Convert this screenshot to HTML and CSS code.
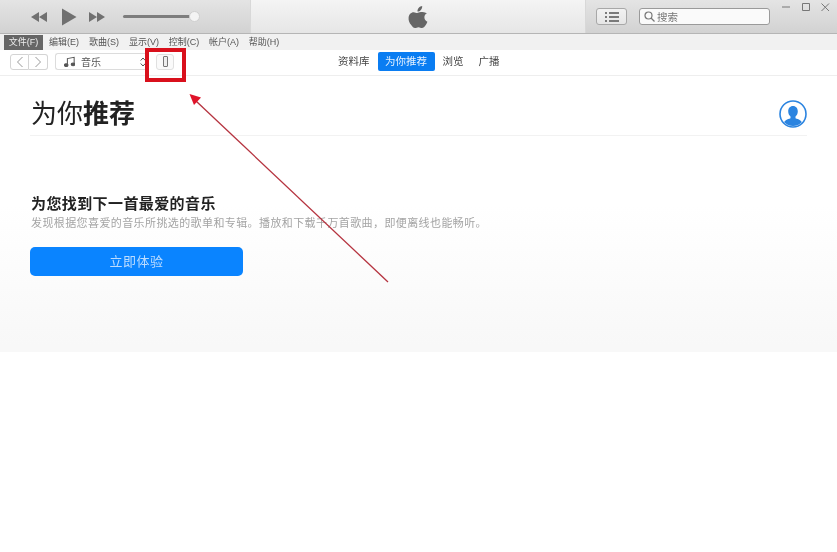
FILE: index.html
```html
<!DOCTYPE html>
<html lang="zh">
<head>
<meta charset="utf-8">
<title>iTunes</title>
<link rel="stylesheet" href="styles.css">
</head>
<body>
<div class="app">
  <header class="titlebar">
    <div class="player">
      <svg class="transport" width="82" height="22" viewBox="0 0 82 22">
        <path class="glyph" d="M16 6v10l-8-5zM24 6v10l-8-5z"/>
        <path class="glyph" d="M39 2.500v17l14.500-8.500z"/>
        <path class="glyph" d="M66 6v10l8-5zM74 6v10l8-5z"/>
      </svg>
      <div class="volume"><span class="knob"></span></div>
    </div>
    <div class="lcd">
      <svg class="apple" width="20" height="24" viewBox="0 0 20 24">
        <path d="M14.200 1c.1 1.700-.5 3-1.400 4-.9 1-2.100 1.700-3.300 1.600-.2-1.500.5-3 1.300-3.900.9-1 2.300-1.600 3.400-1.700zM18.900 8.300c-1.700 1-2.600 2.400-2.500 4.200.1 2 1.200 3.400 3 4.200-.5 1.400-1.100 2.700-2 3.900-1 1.300-2 2.400-3.400 2.400-1.400 0-1.900-.8-3.500-.8s-2.200.8-3.500.8c-1.500 0-2.600-1.300-3.600-2.700C1.200 17.900.3 15 .6 12.400c.3-2.800 2.300-5.200 5.100-5.200 1.400 0 2.700.9 3.500.9.800 0 2.200-1.100 3.900-1 1.500.1 4.300.4 5.800 1.200z"/>
      </svg>
    </div>
    <div class="tools">
      <button class="listbtn" type="button">
        <svg width="14" height="10" viewBox="0 0 14 10"><path d="M0 1h2M4 1h10M0 5h2M4 5h10M0 9h2M4 9h10"/></svg>
      </button>
      <div class="search">
        <svg width="11" height="11" viewBox="0 0 11 11"><circle cx="4.500" cy="4.500" r="3.500"/><path d="M7 7l3.500 3.500"/></svg>
        <span>搜索</span>
      </div>
      <div class="winctl">
        <svg width="56" height="12" viewBox="0 0 56 12">
          <path d="M1 5h8M21.500 1.500h7v7h-7zM40.500 1.500l7.500 7.500M48 1.500L40.500 9"/>
        </svg>
      </div>
    </div>
  </header>

  <nav class="menubar">
    <span class="menu active">文件(F)</span>
    <span class="menu">编辑(E)</span>
    <span class="menu">歌曲(S)</span>
    <span class="menu">显示(V)</span>
    <span class="menu">控制(C)</span>
    <span class="menu">帐户(A)</span>
    <span class="menu">帮助(H)</span>
  </nav>

  <div class="toolbar">
    <div class="navgroup">
      <button class="navbtn" type="button"><svg width="8" height="12" viewBox="0 0 8 12"><path d="M6.500 1L1.500 6l5 5"/></svg></button>
      <button class="navbtn" type="button"><svg width="8" height="12" viewBox="0 0 8 12"><path d="M1.500 1l5 5-5 5"/></svg></button>
    </div>
    <div class="source">
      <svg class="note" width="11" height="12" viewBox="0 0 13 13"><path d="M4 10V2.500l8-1.500v8"/><ellipse cx="2.600" cy="10.300" rx="2.100" ry="1.600"/><ellipse cx="10.600" cy="9.300" rx="2.100" ry="1.600"/></svg>
      <span class="source-name">音乐</span>
      <svg class="updown" width="6" height="10" viewBox="0 0 6 10"><path d="M.7 3.500L3 1l2.300 2.500M.7 6.500L3 9l2.300-2.500"/></svg>
    </div>
    <button class="device" type="button"><span class="phone"></span></button>
    <div class="tabs">
      <span class="tab">资料库</span>
      <span class="tab current">为你推荐</span>
      <span class="tab">浏览</span>
      <span class="tab">广播</span>
    </div>
  </div>

  <main class="content">
    <div class="heading">
      <h1 class="title">为你<b>推荐</b></h1>
      <svg class="avatar" width="28" height="28" viewBox="0 0 28 28">
        <defs><clipPath id="disc"><circle cx="14" cy="14" r="12"/></clipPath></defs>
        <circle class="ring" cx="14" cy="14" r="13"/>
        <g clip-path="url(#disc)">
          <path class="figure" d="M14 6c3 0 4.800 2.300 4.800 5.200 0 2.300-1 4.300-2.300 5.300v1.700c2.800 1 7 2 7 6.800v3H4.500v-3c0-4.800 4.200-5.800 7-6.800v-1.700c-1.300-1-2.300-3-2.300-5.300C9.200 8.300 11 6 14 6z"/>
        </g>
      </svg>
    </div>
    <section class="promo">
      <h2 class="promo-title">为您找到下一首最爱的音乐</h2>
      <p class="promo-text">发现根据您喜爱的音乐所挑选的歌单和专辑。播放和下载千万首歌曲，即便离线也能畅听。</p>
      <button class="cta" type="button">立即体验</button>
    </section>
  </main>

  <div class="blank"></div>

  <svg class="annotation" width="837" height="552" viewBox="0 0 837 552">
    <rect class="mark-box" x="147" y="50" width="37" height="30"/>
    <path class="mark-line" d="M388 282L196 101"/>
    <path class="mark-head" d="M189.500 94l11.500 3.500-7 7.500z"/>
  </svg>
</div>
</body>
</html>
```
FILE: styles.css
```css
* { box-sizing: border-box; }

html, body {
  margin: 0;
  height: 100%;
  background: #fff;
}

body {
  font-family: "Liberation Sans", "Noto Sans CJK SC", sans-serif;
  color: #333;
  overflow: hidden;
}

.app {
  position: relative;
  width: 837px;
  height: 552px;
  display: flex;
  flex-direction: column;
  filter: blur(.35px);
}

button {
  font-family: inherit;
  padding: 0;
}

/* Title bar */
.titlebar {
  height: 34px;
  flex: none;
  display: flex;
  border-bottom: 1px solid #b5b5b5;
}

.player {
  width: 251px;
  flex: none;
  display: flex;
  align-items: center;
  padding-left: 23px;
  background: linear-gradient(#e4e4e4, #d2d2d2);
  border-right: 1px solid #d8d8d8;
}

.transport { flex: none; }

.glyph { fill: #707070; }

.volume {
  position: relative;
  width: 72px;
  height: 3px;
  margin-left: 18px;
  background: #7d7d7d;
  border-radius: 2px;
}

.knob {
  position: absolute;
  right: -5px;
  top: -4px;
  width: 11px;
  height: 11px;
  border-radius: 50%;
  background: #f4f4f4;
  border: 1px solid #d0d0d0;
}

.lcd {
  flex: 1;
  display: flex;
  justify-content: center;
  align-items: center;
  padding-right: 1px;
  background: linear-gradient(#f4f4f4, #e6e6e6);
}

.apple { fill: #666; }

.tools {
  width: 252px;
  flex: none;
  display: flex;
  align-items: flex-start;
  padding: 8px 0 0 10px;
  background: linear-gradient(#e4e4e4, #d2d2d2);
  border-left: 1px solid #d8d8d8;
}

.listbtn {
  width: 31px;
  height: 17px;
  flex: none;
  display: flex;
  align-items: center;
  justify-content: center;
  background: linear-gradient(#f2f2f2, #e6e6e6);
  border: 1px solid #a8a8a8;
  border-radius: 3px;
}

.listbtn svg { stroke: #555; stroke-width: 1.300; fill: none; }

.search {
  width: 131px;
  height: 17px;
  flex: none;
  margin-left: 12px;
  display: flex;
  align-items: center;
  gap: 2px;
  padding-left: 4px;
  background: #fafafa;
  border: 1px solid #9a9a9a;
  border-radius: 3px;
  font-size: 10.500px;
  color: #777;
}

.search svg { stroke: #777; stroke-width: 1.200; fill: none; }

.winctl {
  flex: none;
  margin: -6px 0 0 11px;
}

.winctl svg {
  display: block;
  stroke: #777;
  stroke-width: 1;
  fill: none;
}

/* Menu bar */
.menubar {
  height: 16px;
  flex: none;
  display: flex;
  align-items: center;
  padding-left: 4px;
  background: #f1f1f1;
  font-size: 9px;
  color: #555;
}

.menu {
  width: 40px;
  height: 15px;
  line-height: 15px;
  text-align: center;
  white-space: nowrap;
}

.menu.active {
  width: 39px;
  margin-right: 1px;
  background: #666;
  color: #eee;
}

/* Toolbar */
.toolbar {
  position: relative;
  height: 26px;
  flex: none;
  display: flex;
  align-items: center;
  padding: 0 0 2px 10px;
  background: #fff;
  border-bottom: 1px solid #eee;
}

.navgroup { display: flex; }

.navbtn {
  width: 19px;
  height: 16px;
  display: flex;
  align-items: center;
  justify-content: center;
  background: #fff;
  border: 1px solid #d4d4d4;
}

.navbtn:first-child { border-radius: 3px 0 0 3px; }
.navbtn:last-child { border-radius: 0 3px 3px 0; border-left: 0; }

.navbtn svg { stroke: #999; stroke-width: 1; fill: none; }

.source {
  width: 95px;
  height: 17px;
  margin-left: 7px;
  display: flex;
  align-items: center;
  padding-left: 8px;
  border: 1px solid #dcdcdc;
  border-right-color: transparent;
  border-radius: 3px;
  font-size: 10px;
  color: #555;
}

.note { stroke: #555; stroke-width: 1.200; fill: #555; }
.note path { fill: none; }

.source-name { margin-left: 6px; flex: 1; }

.updown {
  stroke: #555;
  fill: none;
  margin-right: 3px;
}

.device {
  width: 18px;
  height: 16px;
  margin-left: 6px;
  display: flex;
  align-items: center;
  justify-content: center;
  background: #fafafa;
  border: 1px solid #e0e0e0;
  border-radius: 3px;
}

.phone {
  width: 5px;
  height: 11px;
  border: 1px solid #777;
  border-radius: 1px;
  background: #eee;
}

.tabs {
  position: absolute;
  left: 333px;
  top: 2px;
  display: flex;
  align-items: center;
  font-size: 10.500px;
  color: #444;
}

.tab {
  height: 19px;
  line-height: 19px;
  padding: 0 5px;
  white-space: nowrap;
}

.tab:last-child { margin-left: 5px; }

.tab.current {
  width: 57px;
  margin: 0 3px;
  padding: 0;
  text-align: center;
  background: #0a7df2;
  color: #e6f2ff;
  border-radius: 2px;
}

/* Content */
.content {
  height: 276px;
  flex: none;
  padding: 0 30px;
  background: linear-gradient(#fff 0, #fff 130px, #f8f8f8 270px);
}

.heading {
  height: 60px;
  display: flex;
  align-items: center;
  justify-content: space-between;
  padding: 16px 0 0 1px;
  border-bottom: 1px solid #f2f2f2;
}

.title {
  margin: 0;
  font-size: 26px;
  font-weight: 400;
  line-height: 34px;
  color: #222;
}

.title b { font-weight: 700; }

.ring { fill: #fff; stroke: #2b84e0; stroke-width: 1.600; }
.figure { fill: #2b84e0; }

.promo { padding-top: 59px; }

.promo-title {
  margin: 0;
  padding-left: 1px;
  font-size: 15px;
  line-height: 18px;
  font-weight: 700;
  letter-spacing: .4px;
  color: #222;
}

.promo-text {
  margin: 3px 0 0;
  padding-left: 1px;
  font-size: 11px;
  line-height: 15px;
  letter-spacing: .4px;
  color: #a4a4a4;
  white-space: nowrap;
}

.cta {
  display: block;
  width: 213px;
  height: 29px;
  margin-top: 16px;
  padding-bottom: 3px;
  background: #0a84ff;
  border: 0;
  border-radius: 5px;
  font-size: 13px;
  letter-spacing: .5px;
  color: #bcdcff;
}

.blank {
  flex: 1;
  background: #fff;
}

/* Annotation overlay */
.annotation {
  position: absolute;
  left: 0;
  top: 0;
  pointer-events: none;
}

.mark-box { fill: none; stroke: #d9101c; stroke-width: 4; }
.mark-line { fill: none; stroke: #b5333f; stroke-width: 1.300; }
.mark-head { fill: #e0142a; }
```
